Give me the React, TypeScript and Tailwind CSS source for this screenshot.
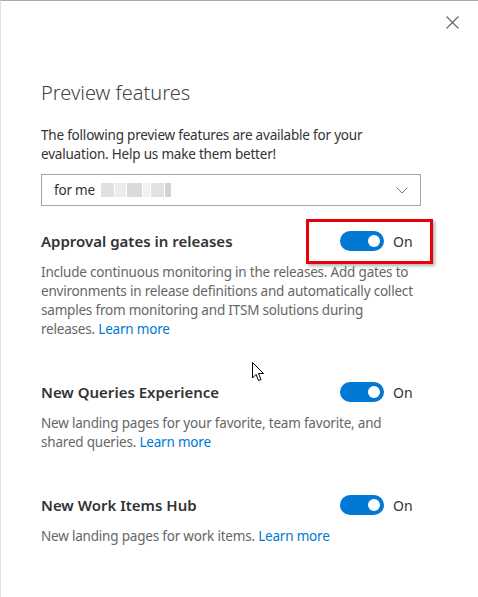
const FONT = { fontFamily: '"Segoe UI", "Noto Sans", "Open Sans", sans-serif' };

type Feature = {
  title: string;
  desc: string;
  highlight?: boolean;
};

const FEATURES: Feature[] = [
  {
    title: "Approval gates in releases",
    desc: "Include continuous monitoring in the releases. Add gates to environments in release definitions and automatically collect samples from monitoring and ITSM solutions during releases.",
    highlight: true,
  },
  {
    title: "New Queries Experience",
    desc: "New landing pages for your favorite, team favorite, and shared queries.",
  },
  {
    title: "New Work Items Hub",
    desc: "New landing pages for work items.",
  },
];

function Toggle() {
  return (
    <div className="flex items-center gap-[9px]">
      <span className="flex h-[20px] w-[44px] items-center justify-end rounded-full bg-[#0078d4] pr-[4px]">
        <span className="block h-[12px] w-[12px] rounded-full bg-white" />
      </span>
      <span className="text-[14px] text-[#333]">On</span>
    </div>
  );
}

function Cursor() {
  return (
    <svg
      className="absolute left-[251px] top-[361px]"
      width="13"
      height="20"
      viewBox="0 0 13 20"
    >
      <path
        d="M0.5 0.5 L0.5 16 L4 12.5 L6.5 18.5 L9 17.5 L6.5 11.5 L11.5 11.5 Z"
        fill="white"
        stroke="black"
        strokeWidth="1"
      />
    </svg>
  );
}

export default function App() {
  return (
    <div
      className="relative h-[597px] w-[478px] overflow-hidden border-t border-l border-t-[#a8a8a8] border-l-[#e3e3e3] bg-white"
      style={FONT}
    >
      <button type="button" className="absolute right-[19px] top-[15px]">
        <svg width="13" height="13" viewBox="0 0 13 13">
          <path d="M0.5 0.5 L12.5 12.5 M12.5 0.5 L0.5 12.5" stroke="#666" strokeWidth="1.1" />
        </svg>
      </button>

      <div className="pl-[40px] pr-[56px] pt-[78px]">
        <h1 className="text-[20px] font-light leading-[28px] text-[#444]">Preview features</h1>
        <p className="mt-[19px] text-[13.5px] leading-[19px] tracking-[-0.2px] text-[#333]">
          The following preview features are available for your evaluation. Help us make them better!
        </p>

        <div className="mt-[10px] flex h-[32px] w-[380px] items-center justify-between border border-[#a6a6a6] pl-[12px] pr-[12px]">
          <div className="flex items-center gap-[6px] text-[13.5px] tracking-[-0.2px] text-[#333]">
            <span>for me</span>
            <span className="flex h-[14px] w-[70px] gap-px">
              <span className="h-full w-[14px] bg-[#e0e0e0]" />
              <span className="h-full w-[12px] bg-[#ececec]" />
              <span className="h-full w-[16px] bg-[#dadada]" />
              <span className="h-full w-[8px] bg-[#f2f2f2]" />
              <span className="h-full w-[14px] bg-[#e2e2e2]" />
              <span className="h-full w-[6px] bg-[#d4d4d4]" />
            </span>
          </div>
          <svg width="12" height="7" viewBox="0 0 12 7">
            <path d="M0.5 0.5 L6 6 L11.5 0.5" fill="none" stroke="#777" strokeWidth="1" />
          </svg>
        </div>

        <div className="mt-[15px] flex flex-col gap-[33px]">
          {FEATURES.map((f) => (
            <div key={f.title}>
              <div className="flex h-[40px] items-center justify-between">
                <h2 className="text-[15px] font-semibold text-[#333]">{f.title}</h2>
                <div
                  className={`-mr-[11px] flex h-[45px] w-[127px] shrink-0 items-center ${
                    f.highlight
                      ? "border-[3px] border-[#e8000b] pl-[31px] shadow-[2px_2px_3px_rgba(0,0,0,0.3)]"
                      : "pl-[34px]"
                  }`}
                >
                  <Toggle />
                </div>
              </div>
              <p className="mt-[2px] mr-[5px] text-[13.5px] leading-[19px] tracking-[-0.2px] text-[#666]">
                {f.desc}{" "}
                <a href="#" className="text-[#0078d4]">
                  Learn more
                </a>
              </p>
            </div>
          ))}
        </div>
      </div>

      <Cursor />
    </div>
  );
}
